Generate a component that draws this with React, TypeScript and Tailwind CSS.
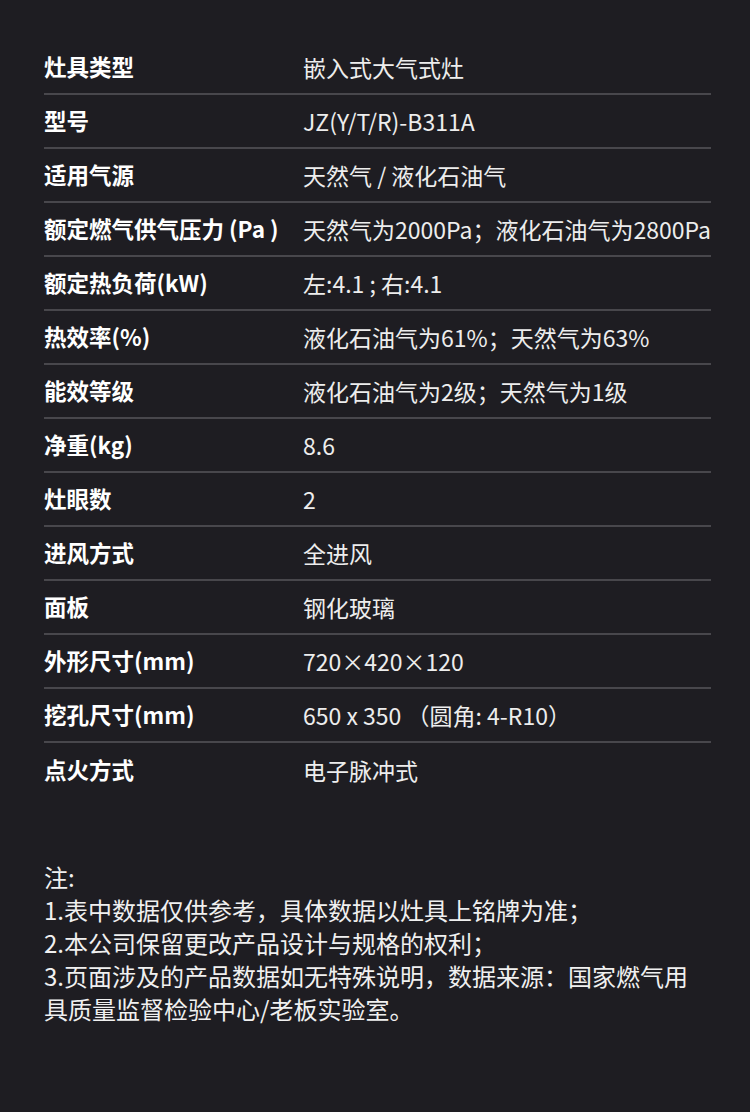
import React from "react";

const rows: [string, string][] = [
  ["灶具类型", "嵌入式大气式灶"],
  ["型号", "JZ(Y/T/R)-B311A"],
  ["适用气源", "天然气 / 液化石油气"],
  ["额定燃气供气压力 (Pa )", "天然气为2000Pa；液化石油气为2800Pa"],
  ["额定热负荷(kW)", "左:4.1 ; 右:4.1"],
  ["热效率(%)", "液化石油气为61%；天然气为63%"],
  ["能效等级", "液化石油气为2级；天然气为1级"],
  ["净重(kg)", "8.6"],
  ["灶眼数", "2"],
  ["进风方式", "全进风"],
  ["面板", "钢化玻璃"],
  ["外形尺寸(mm)", "720×420×120"],
  ["挖孔尺寸(mm)", "650 x 350 （圆角: 4-R10）"],
  ["点火方式", "电子脉冲式"],
];

export default function App() {
  return (
    <div
      className="w-[750px] h-[1112px] bg-[#1e1d22] text-[#f2f2f2] pt-[41px] px-[44px] overflow-hidden"
      style={{ fontFamily: '"Noto Sans CJK SC", "Noto Sans", sans-serif' }}
    >
      <div className="w-[667px] flex flex-col">
        {rows.map(([k, v], i) => (
          <div
            key={i}
            className={
              "flex items-center h-[54px] text-[23px] " +
              (i < rows.length - 1 ? "border-b-2 border-[#48474c]" : "")
            }
          >
            <div className="w-[259px] text-[22.5px] font-bold text-white whitespace-nowrap">{k}</div>
            <div className="whitespace-nowrap text-[#ededed]">{v}</div>
          </div>
        ))}
      </div>
      <div className="mt-[63px] text-[24px] leading-[33px] text-[#f0f0f0]">
        <div>注:</div>
        <div>1.表中数据仅供参考，具体数据以灶具上铭牌为准；</div>
        <div>2.本公司保留更改产品设计与规格的权利；</div>
        <div>3.页面涉及的产品数据如无特殊说明，数据来源：国家燃气用</div>
        <div>具质量监督检验中心/老板实验室。</div>
      </div>
    </div>
  );
}
